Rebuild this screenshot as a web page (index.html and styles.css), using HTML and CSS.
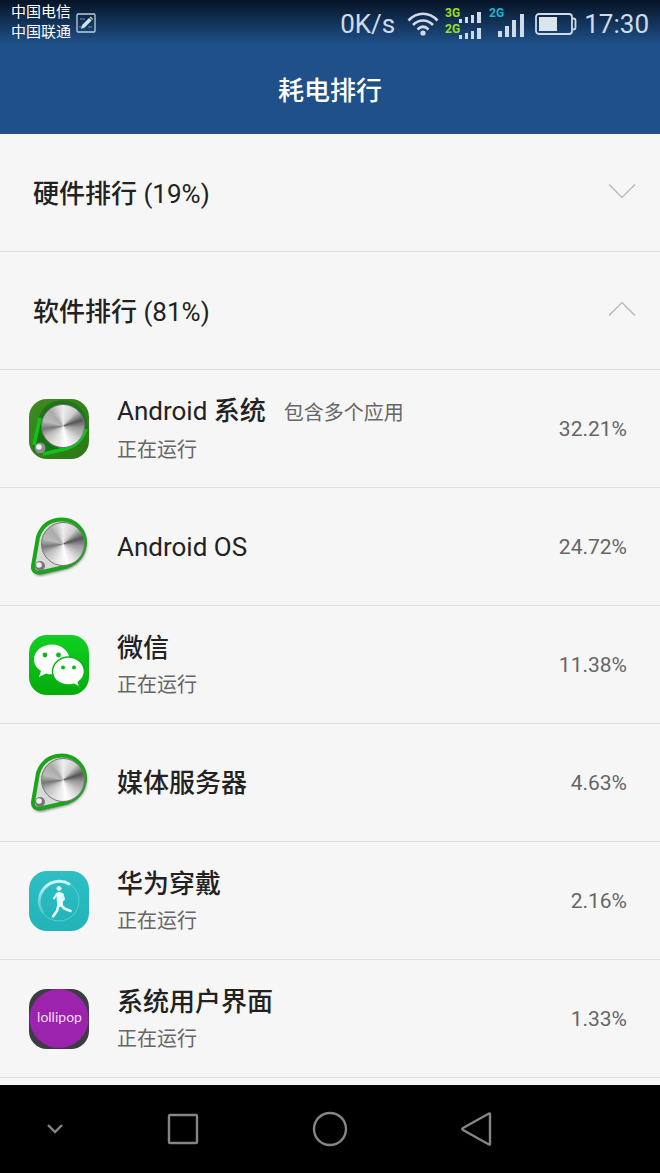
FILE: index.html
```
<!DOCTYPE html>
<html lang="zh-CN">
<head>
  <meta charset="UTF-8">
  <meta name="viewport" content="width=device-width, initial-scale=1.0">
  <title>耗电排行</title>
  <link rel="stylesheet" href="styles.css">
</head>
<body>
  <header class="header">
    <div class="status-bar">
      <div class="carriers">
        <div>中国电信</div>
        <div>中国联通</div>
      </div>
      <svg class="note-icon" width="20" height="20" viewBox="0 0 20 20">
        <rect x="1" y="1" width="18" height="18" rx="1" fill="none" stroke="#b9cfe0" stroke-width="1.3"/>
        <path d="M4 6h5M12 14h4M3 14h3" stroke="#6f93b5" stroke-width="1"/>
        <path d="M5 16l1.2-4L13 5l2.6 2.6-6.8 7z" fill="#cfe6f2"/>
        <path d="M13.6 4.4l1-1 2.5 2.5-1 1z" fill="#c9d59a"/>
      </svg>
      <div class="status-right">
        <span class="speed">0K/s</span>
        <svg class="wifi" width="32" height="24" viewBox="0 0 32 24" fill="none" stroke="#cfdbe8" stroke-width="2.6">
          <path d="M1.5 8.5C10-.5 22-.5 30.500 8.500"/>
          <path d="M6 13C12 7 20 7 26 13"/>
          <path d="M10.500 17.500C14 14 18 14 21.500 17.500"/>
          <circle cx="16" cy="21" r="2.6" fill="#cfdbe8" stroke="none"/>
        </svg>
        <svg class="sim-one" width="38" height="32" viewBox="0 0 38 32" fill="#cfdbe8">
          <text x="0" y="12" class="net net-green">3G</text>
          <text x="0" y="28" class="net net-green">2G</text>
          <path d="M14 14h3v4h-3zM20 12h3v6h-3zM26 10h3v8h-3zM32 7h4v11h-4z"/>
          <path d="M14 30h3v4h-3zM20 28h3v6h-3zM26 26h3v8h-3zM32 23h4v11h-4z"/>
        </svg>
        <svg class="sim-two" width="36" height="32" viewBox="0 0 36 32" fill="#cfdbe8">
          <text x="0" y="12" class="net net-cyan">2G</text>
          <path d="M9 26h4v6h-4zM16 21h4v11h-4zM23 15h4v17h-4zM31 9h4v23h-4z"/>
        </svg>
        <svg class="battery" width="42" height="22" viewBox="0 0 42 22">
          <rect x="1" y="1" width="36" height="20" rx="3" fill="none" stroke="#cfdbe8" stroke-width="1.8"/>
          <path d="M38 5.500q2.500 0 2.500 2v7q0 2-2.500 2" fill="none" stroke="#cfdbe8" stroke-width="1.8"/>
          <rect x="4" y="4" width="18" height="14" fill="#dce4ec"/>
        </svg>
        <span class="clock">17:30</span>
      </div>
    </div>
    <h1 class="title">耗电排行</h1>
  </header>

  <main class="content">
    <button class="group" type="button" aria-expanded="false">
      <span><b>硬件排行</b> (19%)</span>
      <svg width="28" height="16" viewBox="0 0 28 16"><path d="M1 1.500l13 13 13-13"/></svg>
    </button>
    <button class="group" type="button" aria-expanded="true">
      <span><b>软件排行</b> (81%)</span>
      <svg width="28" height="16" viewBox="0 0 28 16"><path d="M1 14.500l13-13 13 13"/></svg>
    </button>

    <ul class="app-list">
      <li class="app">
        <div class="icon dial">
          <svg width="60" height="60" viewBox="0 0 60 60">
            <defs>
              <linearGradient id="moss" x1="0" y1="0" x2="1" y2="1">
                <stop offset="0" stop-color="#3f8a22"/>
                <stop offset="1" stop-color="#2a7a14"/>
              </linearGradient>
            </defs>
            <rect width="60" height="60" rx="18" fill="url(#moss)"/>
            <path d="M4 48L10 20Q14 3 33 2.500A24 24 0 0 1 56 30Q52 45 38 50L12 55Q4 55 4 48z" fill="#167312"/>
            <path d="M5 46L11 19M14 55L38 49.500Q52 45 57 30" fill="none" stroke="#0cc41a" stroke-width="3.500"/>
            <path d="M11 19Q16 3 33 2.500A24 24 0 0 1 57 30" fill="none" stroke="#22751a" stroke-width="2.500"/>
            <circle cx="11" cy="49" r="5.500" fill="#8d8d8d"/>
            <circle cx="10" cy="48" r="2.800" fill="#eee"/>
          </svg>
        </div>
        <div class="info">
          <div class="name">Android <b>系统</b><span class="note">包含多个应用</span></div>
          <div class="state">正在运行</div>
        </div>
        <div class="percent">32.21%</div>
      </li>
      <li class="app">
        <div class="icon dial">
          <svg width="60" height="60" viewBox="0 0 60 60">
            <defs>
              <filter id="soft" x="-20%" y="-20%" width="140%" height="140%">
                <feGaussianBlur stdDeviation="1.5"/>
              </filter>
            </defs>
            <path d="M5 51L10 21Q16 4 34 4A23 23 0 0 1 57 28Q56 44 40 51L12 58Q4 58 5 51z" fill="#666" stroke="#666" filter="url(#soft)"/>
            <path d="M4 49L9 20Q15 2.500 33 2.500A23 23 0 0 1 56 27Q54 43 38 49.500L11 55.500Q3.500 56 4 49z" fill="#d9d9d9" stroke="#1aa51a" stroke-width="4"/>
            <circle cx="11" cy="49" r="5" fill="#777"/>
            <circle cx="10" cy="48" r="2.800" fill="#eee"/>
          </svg>
        </div>
        <div class="info">
          <div class="name">Android OS</div>
        </div>
        <div class="percent">24.72%</div>
      </li>
      <li class="app">
        <div class="icon">
          <svg width="60" height="60" viewBox="0 0 60 60">
            <defs>
              <linearGradient id="wechat" x1="0" y1="0" x2="0" y2="1">
                <stop offset="0" stop-color="#0fd022"/>
                <stop offset="1" stop-color="#05ab0b"/>
              </linearGradient>
            </defs>
            <rect width="60" height="60" rx="18" fill="url(#wechat)"/>
            <path d="M23 9.500C13 9.500 5 16 5 24.500c0 5 3 9 7 11.500l-2 6 7-3.600c2 .6 4 .8 6 .8 9.500 0 17.500-6.500 17.500-14.700S32.500 9.500 23 9.500z" fill="#fff"/>
            <path d="M39.500 22C31 22 23.500 28 23.500 36.500S31 50 39.500 50c2 0 4-.3 5.500-.8l6 3.300-1.600-5.300c3.600-2.500 6-6.200 6-10.700C55.400 28.500 48 22 39.500 22z" fill="#fff" stroke="#0bb816" stroke-width="1.500"/>
            <g fill="#0bb816">
              <circle cx="16" cy="20" r="2.400"/>
              <circle cx="29.500" cy="20" r="2.400"/>
              <circle cx="34" cy="32.500" r="2"/>
              <circle cx="45" cy="32.500" r="2"/>
            </g>
          </svg>
        </div>
        <div class="info">
          <div class="name"><b>微信</b></div>
          <div class="state">正在运行</div>
        </div>
        <div class="percent">11.38%</div>
      </li>
      <li class="app">
        <div class="icon dial">
          <svg width="60" height="60" viewBox="0 0 60 60">
            <path d="M5 51L10 21Q16 4 34 4A23 23 0 0 1 57 28Q56 44 40 51L12 58Q4 58 5 51z" fill="#666" stroke="#666" filter="url(#soft)"/>
            <path d="M4 49L9 20Q15 2.500 33 2.500A23 23 0 0 1 56 27Q54 43 38 49.500L11 55.500Q3.500 56 4 49z" fill="#d9d9d9" stroke="#1aa51a" stroke-width="4"/>
            <circle cx="11" cy="49" r="5" fill="#777"/>
            <circle cx="10" cy="48" r="2.800" fill="#eee"/>
          </svg>
        </div>
        <div class="info">
          <div class="name"><b>媒体服务器</b></div>
        </div>
        <div class="percent">4.63%</div>
      </li>
      <li class="app">
        <div class="icon">
          <svg width="60" height="60" viewBox="0 0 60 60">
            <defs>
              <linearGradient id="wear" x1="0" y1="0" x2="0" y2="1">
                <stop offset="0" stop-color="#2ebfc4"/>
                <stop offset="1" stop-color="#22b3b8"/>
              </linearGradient>
              <linearGradient id="arc" x1="0" y1="1" x2="1" y2="0">
                <stop offset="0" stop-color="#fff" stop-opacity="0"/>
                <stop offset=".6" stop-color="#c9f3f4"/>
              </linearGradient>
            </defs>
            <rect width="60" height="60" rx="18" fill="url(#wear)"/>
            <circle cx="30" cy="30" r="20" fill="none" stroke="#58cdd0" stroke-width="1"/>
            <path d="M14 42A20 20 0 0 1 41 13.500" fill="none" stroke="url(#arc)" stroke-width="3"/>
            <g fill="none" stroke="#e3fbfb" stroke-linecap="round" stroke-linejoin="round">
              <circle cx="30" cy="17.500" r="2" fill="#e3fbfb" stroke-width="1"/>
              <path d="M30.500 24L31 33" stroke-width="6"/>
              <path d="M28 22.500l-3 5M33.500 23l1.500 5-2 2" stroke-width="2"/>
              <path d="M29.500 34l-1.500 6-4 5.500M32 34l3.500 3.500 6 2.500" stroke-width="2.600"/>
            </g>
          </svg>
        </div>
        <div class="info">
          <div class="name"><b>华为穿戴</b></div>
          <div class="state">正在运行</div>
        </div>
        <div class="percent">2.16%</div>
      </li>
      <li class="app">
        <div class="icon">
          <svg width="60" height="60" viewBox="0 0 60 60">
            <defs>
              <clipPath id="tile"><rect width="60" height="60" rx="18"/></clipPath>
            </defs>
            <g clip-path="url(#tile)">
              <rect width="60" height="60" fill="#3b3d42"/>
              <circle cx="30" cy="29.500" r="29.500" fill="#9b23ae"/>
            </g>
            <text x="30.500" y="33" text-anchor="middle" class="lollipop">lollipop</text>
          </svg>
        </div>
        <div class="info">
          <div class="name"><b>系统用户界面</b></div>
          <div class="state">正在运行</div>
        </div>
        <div class="percent">1.33%</div>
      </li>
    </ul>
  </main>

  <nav class="nav-bar">
    <button type="button" aria-label="隐藏">
      <svg width="20" height="14" viewBox="0 0 20 14"><path d="M3 3l7 7 7-7"/></svg>
    </button>
    <button type="button" aria-label="最近任务">
      <svg width="34" height="34" viewBox="0 0 34 34"><rect x="3" y="3" width="28" height="28" rx="1"/></svg>
    </button>
    <button type="button" aria-label="主页">
      <svg width="36" height="36" viewBox="0 0 36 36"><circle cx="18" cy="18" r="16"/></svg>
    </button>
    <button type="button" aria-label="返回">
      <svg width="34" height="36" viewBox="0 0 34 36"><path d="M30 3v30q0 1-1 .5L3 19q-1.500-1 0-2L29 2.500q1-.5 1 .5z"/></svg>
    </button>
  </nav>
</body>
</html>
```

FILE: styles.css
```
* { box-sizing: border-box; }
body {
  display: flex;
  flex-direction: column;
  min-height: 100vh;
  margin: 0;
  background: #f6f6f6;
  color: #222;
  font-family: Roboto, "Noto Sans CJK SC", sans-serif;
}
button {
  padding: 0;
  border: none;
  background: none;
  color: inherit;
  font: inherit;
  cursor: pointer;
}
svg { display: block; }
b { font-weight: 500; }

.header {
  height: 134px;
  background: linear-gradient(#061325, #1f5089 44px);
  color: #fff;
}
.status-bar {
  display: flex;
  align-items: center;
  height: 47px;
  padding: 0 11px;
}
.carriers {
  margin-top: -4px;
  font-size: 15px;
  line-height: 20px;
}
.note-icon { margin: 0 0 2px 5px; }
.status-right {
  display: flex;
  align-items: center;
  margin-left: auto;
  color: #cfdbe8;
  font-size: 26px;
}
.wifi { margin-left: 12px; }
.sim-one { margin-left: 6px; overflow: visible; }
.sim-two { margin-left: 6px; }
.sim-one, .sim-two { margin-bottom: 6px; }
.battery { margin: 0 7px 0 10px; }
.net { font: bold 12px Roboto, sans-serif; }
.net-green { fill: #9be01a; }
.net-cyan { fill: #18b7d4; }
.title {
  margin: 0;
  font-size: 26px;
  font-weight: 500;
  line-height: 88px;
  text-align: center;
}

.content { flex: 1; }
.group, .app {
  display: flex;
  align-items: center;
  width: 100%;
  height: 118px;
  border-bottom: 1px solid #dfdfdf;
}
.group {
  justify-content: space-between;
  padding: 0 24px 3px 33px;
  font-size: 26px;
}
.group path {
  fill: none;
  stroke: #b4b4b4;
  stroke-width: 1.2;
}
.app-list {
  margin: 0;
  padding: 0 0 7px;
  list-style: none;
}
.app { padding: 0 33px 0 29px; }
.icon {
  position: relative;
  width: 60px;
  height: 60px;
}
/* brushed metal knob on top of the belt */
.dial::after {
  content: "";
  position: absolute;
  top: 5px;
  left: 12px;
  width: 42px;
  height: 42px;
  border: 1px solid #777;
  border-radius: 50%;
  background: conic-gradient(#eee, #ccc 40deg, #555 72deg, #999 95deg, #ddd 140deg, #fff 170deg, #ddd 210deg, #bbb 240deg, #777 262deg, #bbb 285deg, #aaa 320deg, #eee);
}
.info {
  flex: 1;
  margin-left: 28px;
}
.name {
  font-size: 26px;
  line-height: 38px;
}
.note {
  margin-left: 18px;
  color: #666;
  font-size: 20px;
}
.state {
  margin-bottom: -3px;
  color: #666;
  font-size: 20px;
  line-height: 36px;
}
.percent {
  color: #666;
  font-size: 21px;
}
.lollipop {
  fill: #f6dcfa;
  font: 400 14px Lato, sans-serif;
}

.nav-bar {
  display: grid;
  grid-template-columns: 110px 1fr 1fr 1fr 110px;
  height: 88px;
  background: #000;
}
.nav-bar button {
  display: flex;
  align-items: center;
  justify-content: center;
}
.nav-bar svg {
  fill: none;
  stroke: #858585;
  stroke-width: 2.4;
}
```
